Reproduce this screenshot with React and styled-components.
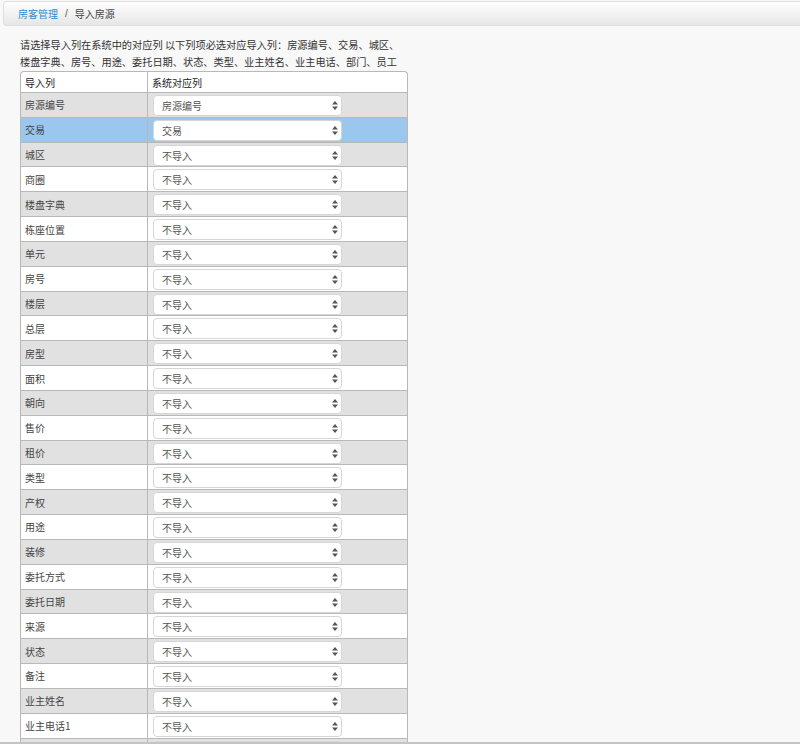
import React from 'react'
import styled, { createGlobalStyle } from 'styled-components'

const GlobalStyle = createGlobalStyle`
    html, body {
        margin:0;
        padding:0;
        overflow:hidden;
        background:#f8f8f8;
    }
    body{
        font-family:"Noto Sans CJK SC","Liberation Sans",sans-serif;
        color:#333;
    }
`;

const fields = [
    '房源编号', '交易', '城区', '商圈', '楼盘字典', '栋座位置', '单元', '房号', '楼层', '总层',
    '房型', '面积', '朝向', '售价', '租价', '类型', '产权', '用途', '装修', '委托方式',
    '委托日期', '来源', '状态', '备注', '业主姓名', '业主电话1', '业主电话2', '部门', '员工',
]

const mapped = { '房源编号': '房源编号', '交易': '交易' }

const Caret = () => (
    <svg width="6" height="9" viewBox="0 0 6 9">
        <path d="M3 0 L6 3.6 L0 3.6 Z" fill="#555" />
        <path d="M3 9 L6 5.4 L0 5.4 Z" fill="#555" />
    </svg>
)

const App = () => {
    return (
        <Page>
            <GlobalStyle />
            <Breadcrumb>
                <CrumbLink>房客管理</CrumbLink>
                <Divider>/</Divider>
                <CrumbCurrent>导入房源</CrumbCurrent>
            </Breadcrumb>
            <Content>
                <Notice>
                    请选择导入列在系统中的对应列 以下列项必选对应导入列：房源编号、交易、城区、楼盘字典、房号、用途、委托日期、状态、类型、业主姓名、业主电话、部门、员工
                </Notice>
                <Table>
                    <HeadRow>
                        <HeadCell>导入列</HeadCell>
                        <HeadCell>系统对应列</HeadCell>
                    </HeadRow>
                    {fields.map((f, i) => (
                        <Row key={f} $tone={i === 1 ? 'active' : i % 2 === 0 ? 'gray' : 'white'}>
                            <NameCell>{f}</NameCell>
                            <SelectCell>
                                <Select>
                                    <span>{mapped[f] || '不导入'}</span>
                                    <Caret />
                                </Select>
                            </SelectCell>
                        </Row>
                    ))}
                </Table>
            </Content>
            <BottomEdge />
        </Page>
    )
}

const Page = styled.div`
    padding-top:1px;
    font-size:10px;
`;
const Breadcrumb = styled.div`
    margin-left:3px;
    height:25px;
    box-sizing:border-box;
    display:flex;
    align-items:center;
    padding-left:14px;
    border:1px solid #dedede;
    border-right:none;
    border-radius:4px 0 0 4px;
    background:linear-gradient(#ffffff, #e6e6e6);
    font-size:10px;
`;
const CrumbLink = styled.span`
    color:#2a8bd0;
`;
const Divider = styled.span`
    color:#555;
    margin:0 7px;
    font-family:"Liberation Sans",sans-serif;
`;
const CrumbCurrent = styled.span`
    color:#444;
`;
const Content = styled.div`
    padding:10px 0 0 20px;
    width:388px;
`;
const Notice = styled.p`
    margin:0 0 0 0;
    padding:0;
    font-size:10.2px;
    line-height:17px;
    color:#333;
`;
const Table = styled.div`
    margin-top:1px;
    width:388px;
    box-sizing:border-box;
    border:1px solid #b8b8b8;
    border-bottom:none;
    border-radius:4px 4px 0 0;
    overflow:hidden;
    background:#fff;
`;
const HeadRow = styled.div`
    display:grid;
    grid-template-columns:127px 1fr;
    height:20px;
`;
const HeadCell = styled.div`
    display:flex;
    align-items:center;
    padding-left:4px;
    color:#222;
    font-size:10px;
    &:first-child{
        border-right:1px solid #b8b8b8;
    }
`;
const toneBg = {
    gray:'#e1e1e1',
    white:'#ffffff',
    active:'#9bc7ef',
};
const Row = styled.div`
    display:grid;
    grid-template-columns:127px 1fr;
    height:24.84px;
    box-sizing:border-box;
    border-top:1px solid #b8b8b8;
    background:${p => toneBg[p.$tone]};
`;
const NameCell = styled.div`
    display:flex;
    align-items:center;
    padding-left:4px;
    border-right:1px solid #b8b8b8;
    color:#444;
    font-size:10px;
`;
const SelectCell = styled.div`
    padding:2px 0 0 5px;
`;
const Select = styled.div`
    width:189px;
    height:21px;
    box-sizing:border-box;
    display:flex;
    align-items:center;
    justify-content:space-between;
    padding:0 3px 0 8px;
    background:#fff;
    border:1px solid #d6d6d6;
    border-radius:4px;
    color:#555;
    font-size:10px;
`;
const BottomEdge = styled.div`
    position:fixed;
    left:0;
    right:0;
    bottom:0;
    height:2px;
    background:#c4c4c4;
`;

export default App
